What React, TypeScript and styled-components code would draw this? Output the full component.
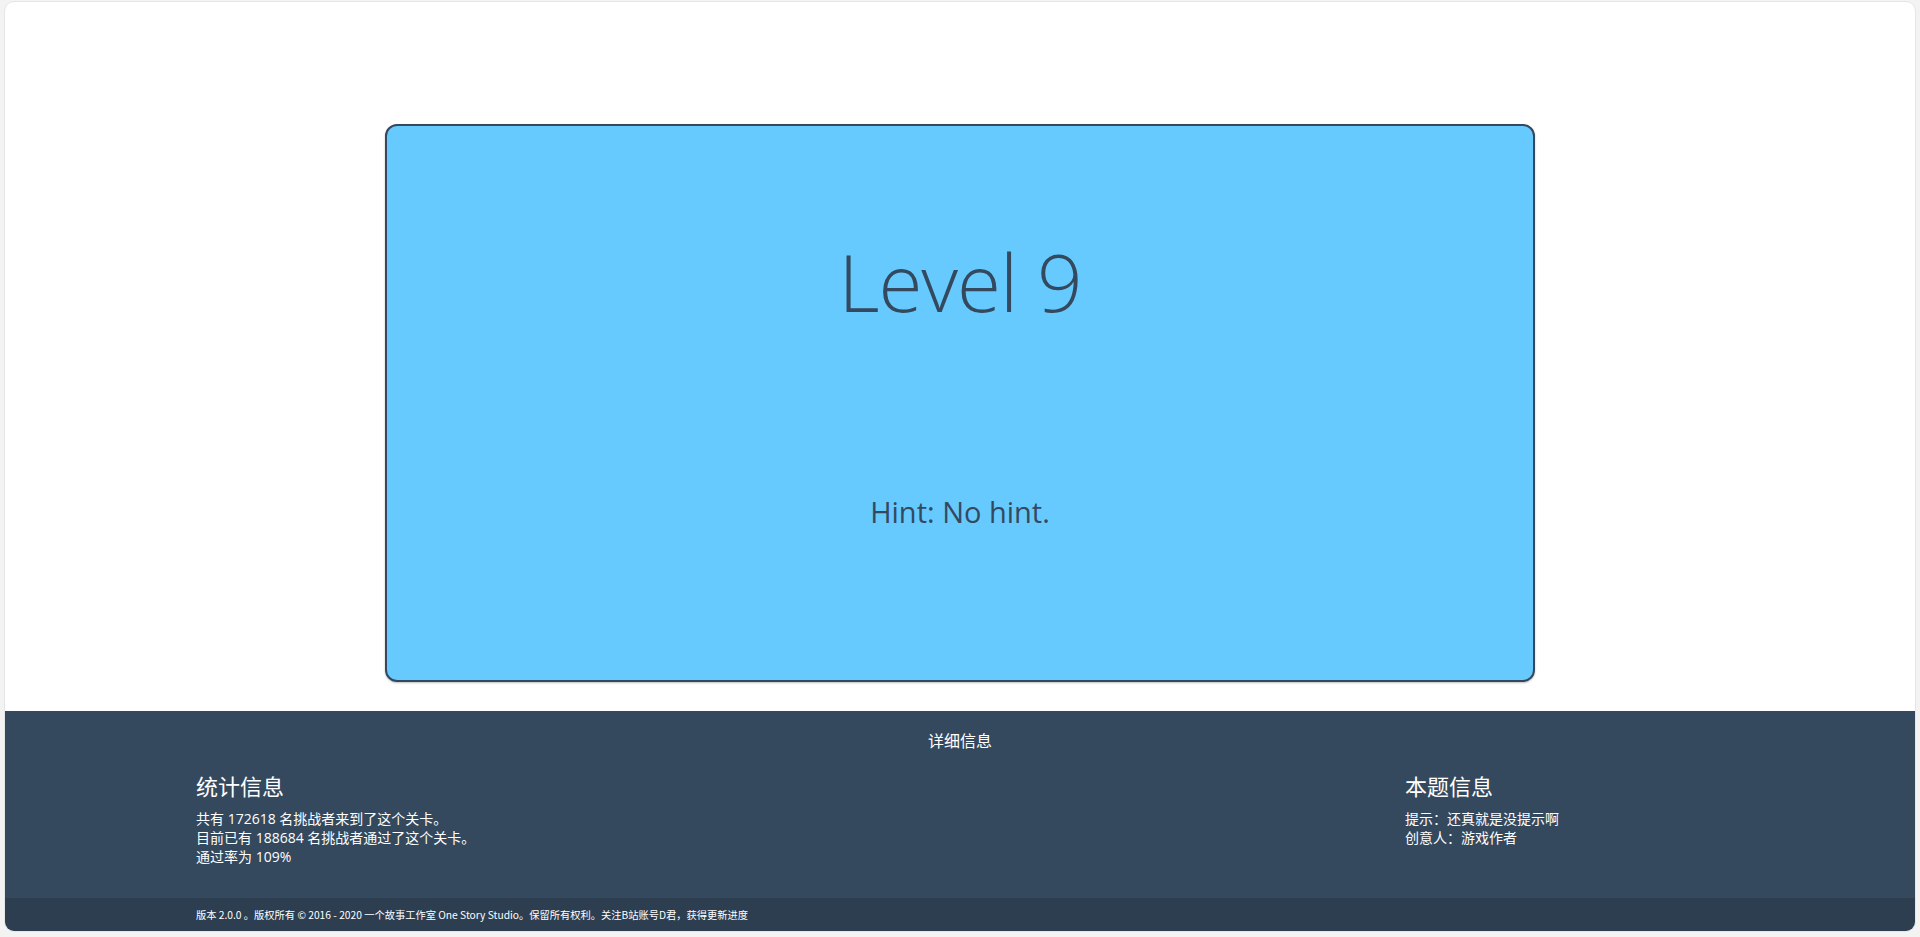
import React from "react";
import styled, { createGlobalStyle } from "styled-components";

const GlobalStyle = createGlobalStyle`
  html, body {
    margin: 0;
    padding: 0;
    background: #f3f3f3;
  }
  body {
    font-family: "Open Sans", "Noto Sans CJK SC", sans-serif;
  }
  * { box-sizing: border-box; }
`;

const Page = styled.div`
  padding: 1px 4px 5px 4px;
  height: 937px;
`;

const Card = styled.div`
  background: #fff;
  border: 1px solid #e6e6e6;
  border-radius: 10px;
  overflow: hidden;
  height: 931px;
  display: flex;
  flex-direction: column;
`;

const Stage = styled.main`
  flex: 1;
  display: flex;
  justify-content: center;
  padding-top: 122px;
  padding-bottom: 29px;
`;

const LevelBox = styled.section`
  width: 1150px;
  height: 558px;
  background: #66caff;
  border: 2px solid #34495e;
  border-radius: 12px;
  box-shadow: 0 1px 2px rgba(0, 0, 0, 0.25);
  display: flex;
  flex-direction: column;
  align-items: center;
  padding-top: 115px;
  color: #34495e;
`;

const LevelTitle = styled.h1`
  margin: 0;
  font-family: "Open Sans", sans-serif;
  font-weight: 300;
  font-size: 80px;
  line-height: 1;
  letter-spacing: -1px;
`;

const Hint = styled.p`
  margin: 176px 0 0;
  font-family: "Open Sans", sans-serif;
  font-weight: 400;
  font-size: 29px;
  line-height: 1;
`;

const Footer = styled.footer`
  background: #34495e;
  color: #fff;
  padding: 20px 0 32px;
`;

const FooterTitle = styled.div`
  text-align: center;
  font-size: 16px;
  line-height: 20px;
`;

const FooterGrid = styled.div`
  width: 80%;
  margin: 20px auto 0;
  display: grid;
  grid-template-columns: 1fr 319px;
`;

const InfoHeading = styled.h3`
  margin: 0 0 8px;
  font-size: 22px;
  line-height: 30px;
  font-weight: 400;
`;

const InfoLine = styled.div`
  font-size: 14px;
  line-height: 19px;
`;

const BottomBar = styled.div`
  background: #2c3e50;
  color: #fff;
  height: 34px;
  display: flex;
  align-items: center;
`;

const BottomInner = styled.div`
  width: 80%;
  margin: 0 auto;
  font-family: "Noto Sans CJK SC", "Open Sans", sans-serif;
  font-size: 10.25px;
  line-height: 14px;
`;

export default function App() {
  return (
    <>
      <GlobalStyle />
      <Page>
        <Card>
          <Stage>
            <LevelBox>
              <LevelTitle>Level 9</LevelTitle>
              <Hint>Hint: No hint.</Hint>
            </LevelBox>
          </Stage>
          <Footer>
            <FooterTitle>详细信息</FooterTitle>
            <FooterGrid>
              <div>
                <InfoHeading>统计信息</InfoHeading>
                <InfoLine>共有 172618 名挑战者来到了这个关卡。</InfoLine>
                <InfoLine>目前已有 188684 名挑战者通过了这个关卡。</InfoLine>
                <InfoLine>通过率为 109%</InfoLine>
              </div>
              <div>
                <InfoHeading>本题信息</InfoHeading>
                <InfoLine>提示：还真就是没提示啊</InfoLine>
                <InfoLine>创意人：游戏作者</InfoLine>
              </div>
            </FooterGrid>
          </Footer>
          <BottomBar>
            <BottomInner>
              版本 2.0.0 。版权所有 © 2016 - 2020 一个故事工作室 One Story Studio。保留所有权利。关注B站账号D君，获得更新进度
            </BottomInner>
          </BottomBar>
        </Card>
      </Page>
    </>
  );
}
